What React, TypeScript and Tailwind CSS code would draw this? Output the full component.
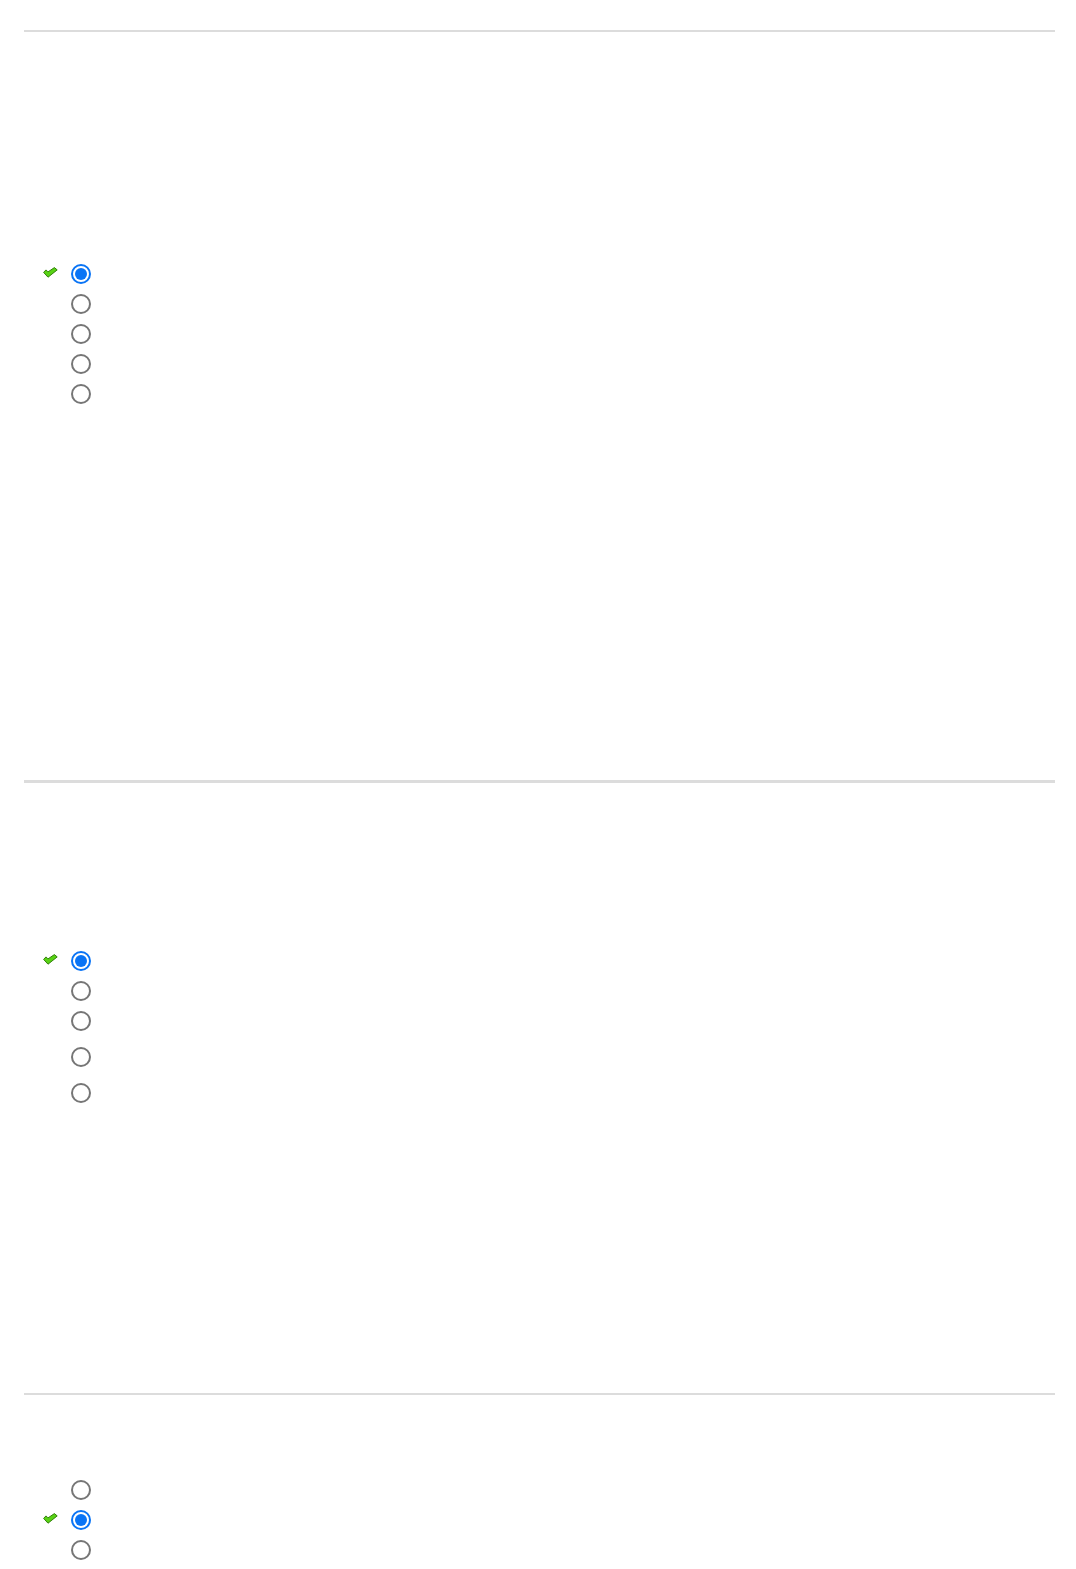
import React from "react";

type Question = {
  gapTop: number;
  gapBottom: number;
  lineClass: string;
  rows: { h: number; checked?: boolean }[];
};

const questions: Question[] = [
  {
    gapTop: 232,
    gapBottom: 376,
    lineClass: "h-[2px]",
    rows: [{ h: 30, checked: true }, { h: 30 }, { h: 30 }, { h: 30 }, { h: 30 }],
  },
  {
    gapTop: 168,
    gapBottom: 290,
    lineClass: "h-[3px]",
    rows: [{ h: 30, checked: true }, { h: 30 }, { h: 30 }, { h: 42 }, { h: 30 }],
  },
  {
    gapTop: 85,
    gapBottom: 40,
    lineClass: "h-[2px]",
    rows: [{ h: 30 }, { h: 30, checked: true }, { h: 30 }],
  },
];

function Tick() {
  return (
    <svg width="15" height="11" viewBox="0 0 15 11" className="block">
      <path
        d="M0.6 5.4 L3 2.9 L5 4.9 L11.4 0.6 L14.2 2.9 L5 10.2 Z"
        fill="#58d214"
        stroke="#33800c"
        strokeWidth="1"
        strokeLinejoin="round"
      />
    </svg>
  );
}

function Radio({ checked }: { checked?: boolean }) {
  if (checked) {
    return (
      <span className="flex h-5 w-5 items-center justify-center rounded-full border-2 border-[#0a74f5] bg-white">
        <span className="h-[12px] w-[12px] rounded-full bg-[#0a74f5]" />
      </span>
    );
  }
  return <span className="block h-5 w-5 rounded-full border-2 border-[#767676] bg-white" />;
}

export default function App() {
  return (
    <div className="min-h-[1569px] bg-white pl-6 pr-[21px] pt-[30px] font-['Liberation_Sans',Arial,sans-serif]">
      {questions.map((q, qi) => (
        <section key={qi}>
          <div className={`${q.lineClass} w-full bg-[#dcdcdc]`} />
          <div style={{ height: q.gapTop - 5 }} />
          <ul>
            {q.rows.map((r, ri) => (
              <li key={ri} className="flex items-center" style={{ height: r.h }}>
                <span className="ml-[19px] mr-[13px] flex h-[11px] w-[15px] -translate-y-[2px] justify-center">
                  {r.checked && <Tick />}
                </span>
                <Radio checked={r.checked} />
              </li>
            ))}
          </ul>
          <div style={{ height: q.gapBottom - 5 }} />
        </section>
      ))}
    </div>
  );
}
